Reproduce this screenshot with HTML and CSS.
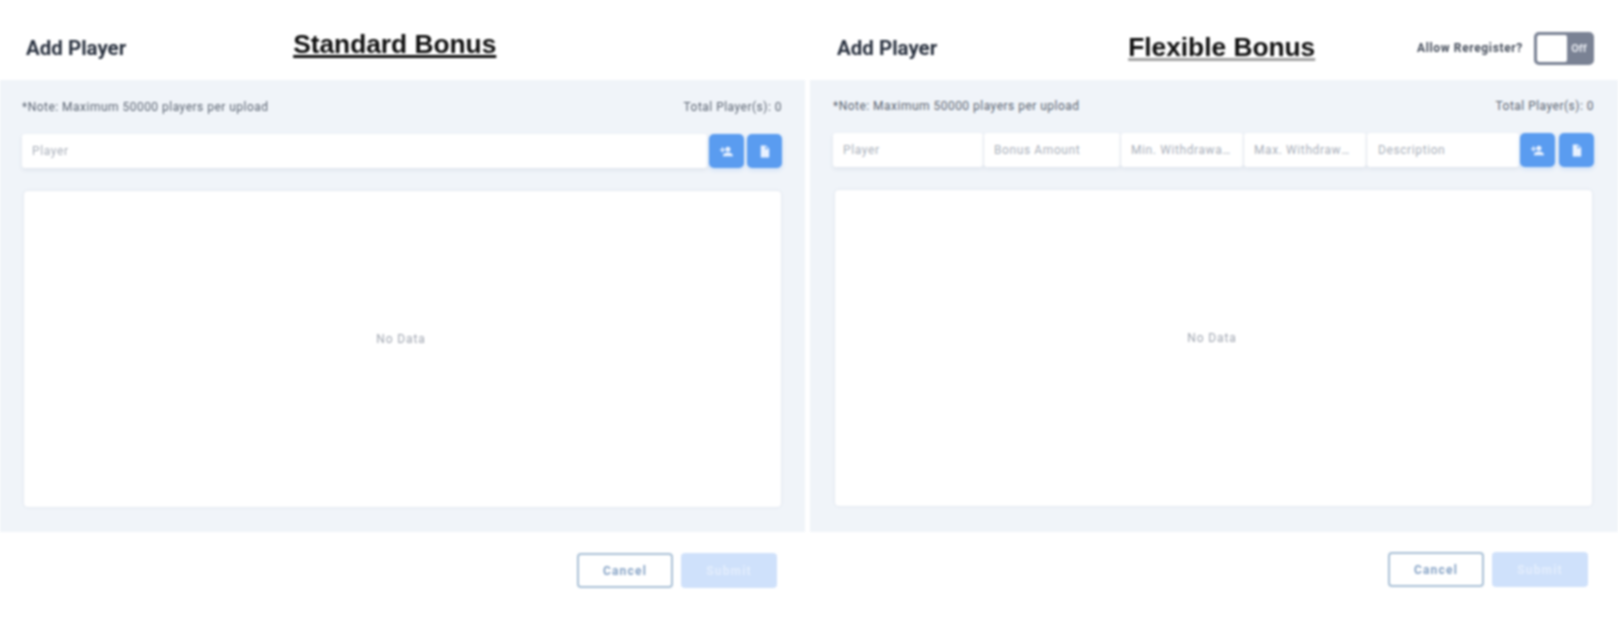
FILE: index.html
```html
<!DOCTYPE html>
<html lang="en">
<head>
<meta charset="utf-8">
<title>Add Player</title>
<link rel="stylesheet" href="styles.css">
</head>
<body>
<main class="page">
  <section class="modal modal-standard">
    <header class="modal-head">
      <h2 class="modal-title">Add Player</h2>
      <h1 class="kind kind-standard">Standard Bonus</h1>
    </header>
    <div class="modal-body">
      <div class="info">
        <span>*Note: Maximum 50000 players per upload</span>
        <span>Total Player(s): 0</span>
      </div>
      <div class="entry">
        <input class="field field-grow" placeholder="Player">
        <button class="icon-btn first" type="button" aria-label="Add player">
          <svg viewBox="0 0 16 16" class="icon"><circle cx="9.5" cy="5.5" r="2.7"/><path d="M4 13c0-2.6 2.4-4 5.5-4s5.5 1.4 5.5 4z"/><path d="M3 3.5h1.5v2h2V7h-2v2H3V7H1V5.5h2z"/></svg>
        </button>
        <button class="icon-btn" type="button" aria-label="Upload file">
          <svg viewBox="0 0 16 16" class="icon"><path d="M4 1.5h5.500L13 5v9.500H4zM9 2.500V5.500h3z" fill-rule="evenodd"/></svg>
        </button>
      </div>
      <div class="table"><span>No Data</span></div>
    </div>
    <footer class="modal-foot">
      <button class="btn btn-cancel" type="button">Cancel</button>
      <button class="btn btn-submit" type="button">Submit</button>
    </footer>
  </section>

  <section class="modal modal-flexible">
    <header class="modal-head">
      <h2 class="modal-title">Add Player</h2>
      <h1 class="kind kind-flexible">Flexible Bonus</h1>
      <div class="rereg">
        <span class="rereg-label">Allow Reregister?</span>
        <div class="toggle"><span class="knob"></span><span class="toggle-text">Off</span></div>
      </div>
    </header>
    <div class="modal-body">
      <div class="info">
        <span>*Note: Maximum 50000 players per upload</span>
        <span>Total Player(s): 0</span>
      </div>
      <div class="entry">
        <input class="field f-player" placeholder="Player">
        <input class="field f-amount" placeholder="Bonus Amount">
        <input class="field f-limit" placeholder="Min. Withdrawal Amount">
        <input class="field f-limit" placeholder="Max. Withdrawal Amount">
        <input class="field f-desc" placeholder="Description">
        <button class="icon-btn first" type="button" aria-label="Add player">
          <svg viewBox="0 0 16 16" class="icon"><circle cx="9.5" cy="5.5" r="2.7"/><path d="M4 13c0-2.6 2.4-4 5.5-4s5.5 1.4 5.5 4z"/><path d="M3 3.5h1.5v2h2V7h-2v2H3V7H1V5.5h2z"/></svg>
        </button>
        <button class="icon-btn" type="button" aria-label="Upload file">
          <svg viewBox="0 0 16 16" class="icon"><path d="M4 1.5h5.500L13 5v9.500H4zM9 2.500V5.500h3z" fill-rule="evenodd"/></svg>
        </button>
      </div>
      <div class="table"><span>No Data</span></div>
    </div>
    <footer class="modal-foot">
      <button class="btn btn-cancel" type="button">Cancel</button>
      <button class="btn btn-submit" type="button">Submit</button>
    </footer>
  </section>
</main>
</body>
</html>
```
FILE: styles.css
```css
* { box-sizing: border-box; }
html, body { margin: 0; height: 100%; background: #fff; overflow: hidden; }
body { font-family: Roboto, "Liberation Sans", sans-serif; color: #5b6472; }
.page { display: flex; gap: 5px; width: 1618px; height: 622px; filter: blur(0.8px); }
.modal { display: flex; flex-direction: column; }
.modal-standard { width: 805px; }
.modal-flexible { width: 808px; }

.modal-head { display: flex; align-items: center; height: 80px; padding: 16px 0 0 26px; }
.modal-flexible .modal-head { padding-left: 27px; }
.modal-title { margin: 0; font-size: 20.5px; font-weight: 700; color: #2a3240; white-space: nowrap; }
.kind { margin: 0; font-family: "Liberation Sans", Arial, sans-serif; font-weight: 700; font-size: 26.3px; color: #0f0f0f; text-decoration: underline; text-decoration-thickness: 3px; white-space: nowrap; }
.kind-standard { margin: -8px 0 0 167px; }
.kind-flexible { margin: -2px 0 0 191px; text-decoration-color: #a2a2a2; }
.rereg { display: flex; align-items: center; margin-left: auto; margin-right: 24px; gap: 11px; }
.rereg-label { font-size: 12px; font-weight: 700; color: #444c5a; letter-spacing: .65px; white-space: nowrap; }
.toggle { display: flex; width: 60px; height: 33px; border: 3px solid #7a8294; border-radius: 5px; background: #7a8294; overflow: hidden; }
.knob { width: 30px; background: #fff; border-radius: 2px; }
.toggle-text { flex: 1; text-align: center; color: #e6e9ef; font-size: 11px; font-weight: 700; line-height: 27px; }

.modal-body { flex: none; height: 452px; background: #f0f4f9; padding: 18px 23px 24px 22px; }
.modal-flexible .modal-body { padding: 17px 24px 25px 23px; }
.info { display: flex; justify-content: space-between; align-items: center; height: 18px; font-size: 12px; letter-spacing: .48px; }
.entry { display: flex; align-items: stretch; height: 34px; margin-top: 18px; }
.field { min-width: 0; border: 0; outline: 0; margin: 0; padding: 0 10px; background: #fff; font: 12px Roboto, sans-serif; letter-spacing: .6px; text-overflow: ellipsis; border-radius: 3px; box-shadow: 0 2px 4px rgba(60, 80, 120, .1); }
.field::placeholder { color: #a9afba; opacity: 1; }
.field-grow { flex: 1; }
.f-player { width: 150px; margin-right: 1px; }
.f-amount { width: 136px; margin-right: 1px; }
.f-limit { width: 122px; margin-right: 1px; }
.f-desc { width: 152px; padding-left: 11px; }
.icon-btn { flex: none; display: flex; align-items: center; justify-content: center; width: 35px; padding: 0; margin-left: 3px; border: 0; border-radius: 5px; background: #5a9cf0; box-shadow: 0 2px 4px rgba(90, 156, 240, .25); }
.icon-btn.first { margin-left: 2px; }
.modal-flexible .icon-btn { margin-left: 4px; }
.modal-flexible .icon-btn.first { margin-left: 1px; }
.icon { width: 15px; height: 15px; fill: #e9f2ff; }
.table { display: flex; align-items: center; justify-content: center; height: 316px; margin: 23px 1px 0 2px; padding: 0 3px 20px 0; background: #fff; border-radius: 4px; box-shadow: 0 0 3px rgba(60, 80, 120, .14); font-size: 12px; letter-spacing: .9px; color: #a0a6b1; }
.modal-flexible .table { margin-right: 2px; }

.modal-foot { display: flex; justify-content: flex-end; gap: 8px; padding: 21px 28px 0 0; }
.modal-flexible .modal-foot { padding: 20px 30px 0 0; }
.btn { width: 96px; height: 35px; padding: 0; border-radius: 4px; font: 700 12px Roboto, sans-serif; letter-spacing: 1.2px; }
.btn-cancel { background: #fff; border: 2px solid #a9c0d6; color: #86a3c6; }
.btn-submit { background: #cfe1fb; border: 0; color: #e4eefc; }
```
